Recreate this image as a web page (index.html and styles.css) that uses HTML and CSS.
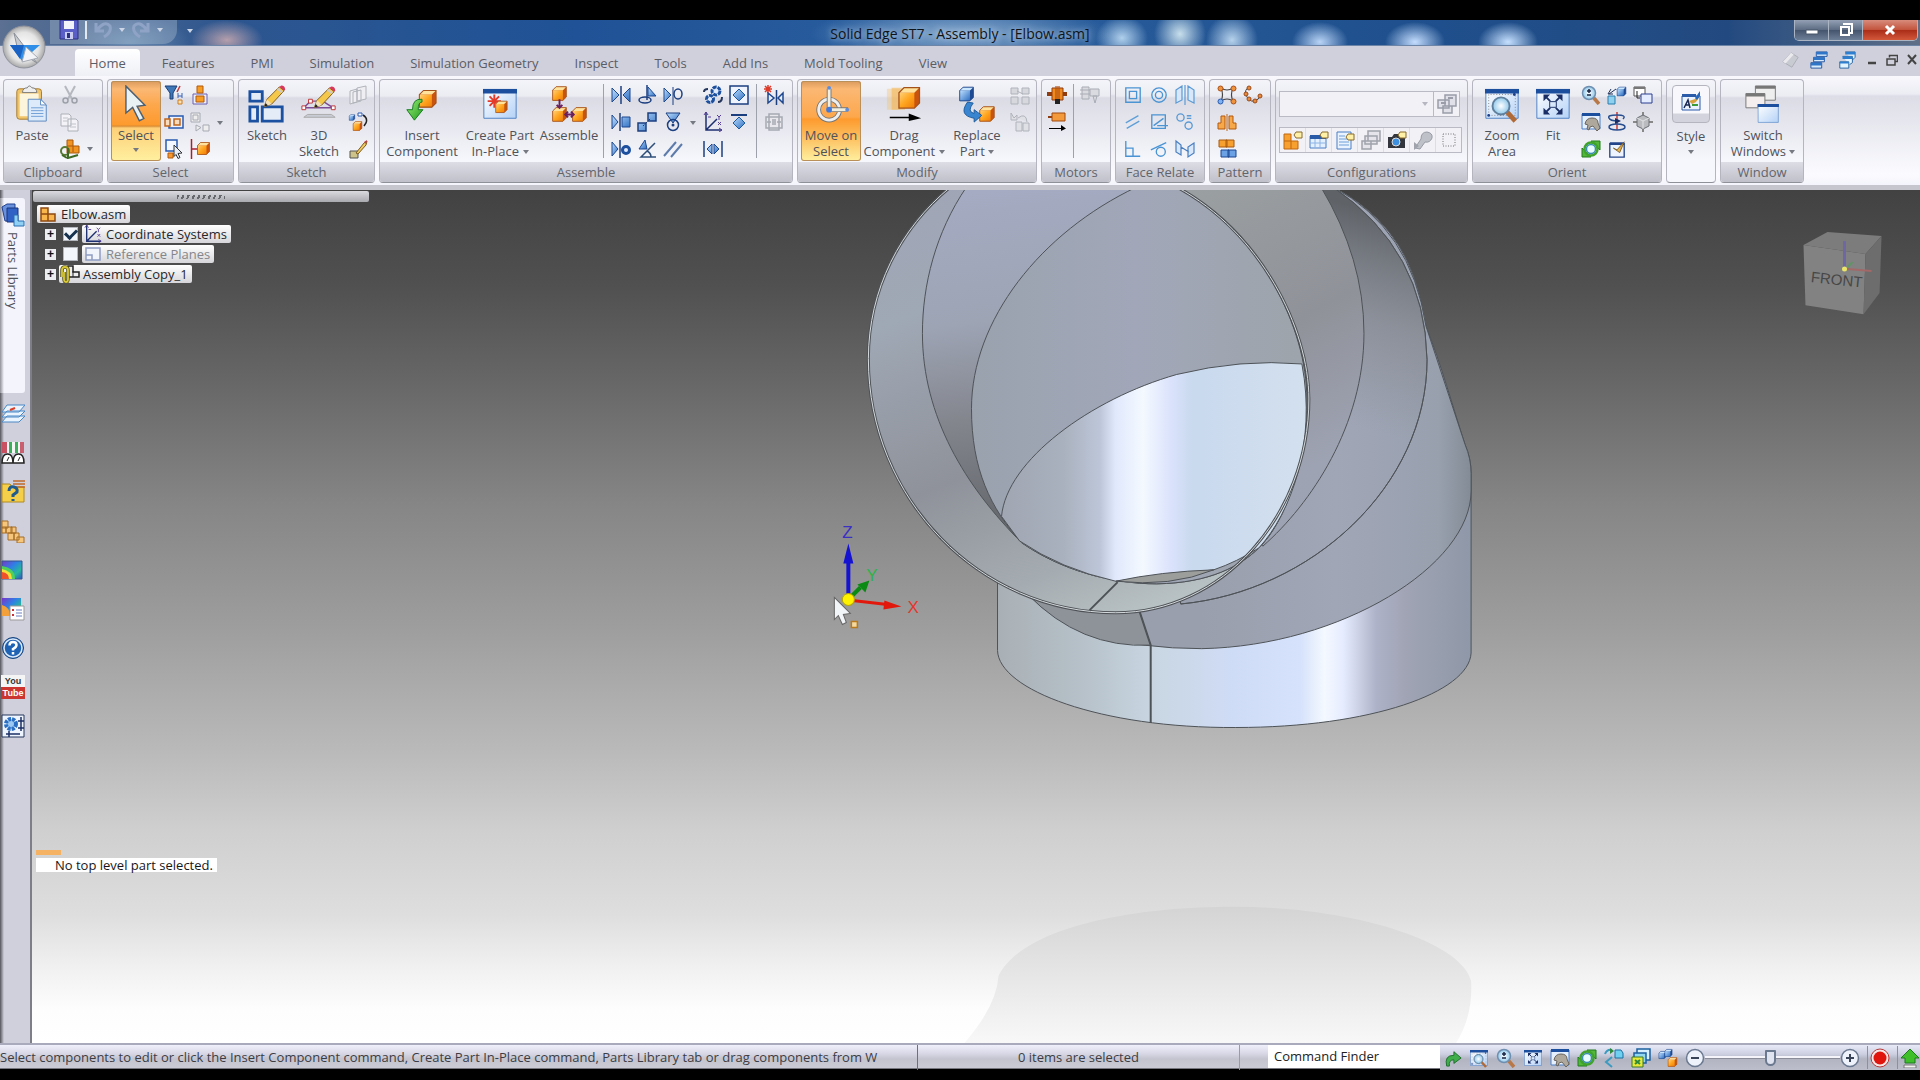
FILE: index.html
```html
<!DOCTYPE html>
<html lang="en">
<head>
<meta charset="utf-8">
<title>Solid Edge ST7 - Assembly - [Elbow.asm]</title>
<link rel="stylesheet" href="styles.css">
</head>
<body>
<svg class="sprite" width="0" height="0" aria-hidden="true">
  <defs>
    <linearGradient id="gOr" x1="0" y1="0" x2="1" y2="1"><stop offset="0" stop-color="#ffd27a"/><stop offset=".5" stop-color="#ffa51f"/><stop offset="1" stop-color="#ef7d08"/></linearGradient>
    <linearGradient id="gBl" x1="0" y1="0" x2="1" y2="1"><stop offset="0" stop-color="#bfe0ff"/><stop offset="1" stop-color="#2a6cc0"/></linearGradient>
    <linearGradient id="gWin" x1="0" y1="0" x2="1" y2="1"><stop offset="0" stop-color="#fff"/><stop offset="1" stop-color="#b4d2f7"/></linearGradient>
    <linearGradient id="gGr" x1="0" y1="0" x2="1" y2="1"><stop offset="0" stop-color="#9ff07a"/><stop offset="1" stop-color="#1f9a1c"/></linearGradient>
    <linearGradient id="gHot" x1="0" y1="0" x2="1" y2="1"><stop offset="0" stop-color="#7a35c8"/><stop offset=".4" stop-color="#2f7fe6"/><stop offset=".7" stop-color="#24b89a"/><stop offset="1" stop-color="#2f50c8"/></linearGradient>
    <radialGradient id="gLens"><stop offset="0" stop-color="#fff"/><stop offset="1" stop-color="#8fc8ea"/></radialGradient>
    <radialGradient id="gOrb"><stop offset="0" stop-color="#fff"/><stop offset=".7" stop-color="#e4e4e4"/><stop offset="1" stop-color="#a8a8a8"/></radialGradient>
  </defs>
  <symbol id="cubeO" viewBox="0 0 20 20"><path d="M2 6 6 2h12v12l-4 4H2z" fill="#c9540e"/><path d="M2 6h12v12H2z" fill="url(#gOr)"/><path d="M2 6 6 2h12l-4 4z" fill="#ffe29b"/><path d="M2 6 6 2h12v12l-4 4H2z" fill="none" stroke="#a4521a"/></symbol>
  <symbol id="cubeB" viewBox="0 0 20 20"><path d="M2 6 6 2h12v12l-4 4H2z" fill="#1d4a94"/><path d="M2 6h12v12H2z" fill="url(#gBl)"/><path d="M2 6 6 2h12l-4 4z" fill="#cbe6ff"/><path d="M2 6 6 2h12v12l-4 4H2z" fill="none" stroke="#1d458a"/></symbol>
  <symbol id="win" viewBox="0 0 36 32"><path d="M1 1h34v30H1z" fill="url(#gWin)" stroke="#4c7fc4"/><path d="M0 0h36v5H0z" fill="#1c4f9e"/></symbol>
  <symbol id="pencil" viewBox="0 0 24 24"><path d="m1 23 3-8L17 2l5 4L9 20z" fill="#f5c84c" stroke="#7c5a1c"/><path d="m1 23 3-8 5 5z" fill="#f3dfb8"/><path d="m1 23 1.500-4 2.500 2.500z" fill="#222"/><path d="m17 2 2-1.500q4 0 4 4L22 6z" fill="#d8385a"/><path d="m15 4 5 4" stroke="#ccc" stroke-width="2"/></symbol>

  <symbol id="paste" viewBox="0 0 36 40"><rect x="2" y="4" width="26" height="32" rx="3" fill="#f0c469" stroke="#a77a2c"/><path d="M8 8q0-5 5-5 2-4 5 0 5 0 5 5z" fill="#eee" stroke="#777"/><path d="M5 9h20v24H5z" fill="#fdf4dc"/><path d="M14 15h13l6 6v17H14z" fill="#dceafa" stroke="#5b87c0"/><path d="M27 15v6h6z" fill="#fff" stroke="#5b87c0"/><path d="M17 24h13M17 27h13M17 30h13M17 33h13" stroke="#6f9fd6"/></symbol>
  <symbol id="arrowCur" viewBox="0 0 24 34"><path d="m3 1 17 17-7 1 6 11-4 2-6-12-6 5z" fill="#e8f2f5" stroke="#4f6070" stroke-width="1.300"/></symbol>
  <symbol id="sketch" viewBox="0 0 40 40"><path d="M2 7h13v10H2zM2 23h8v15H2zM15 23h21v15H15z" fill="#e4ecf8" stroke="#1c50a0" stroke-width="3"/><use href="#pencil" x="16" y="0" width="24" height="24"/></symbol>
  <symbol id="sketch3" viewBox="0 0 40 40"><path d="M4 24h31L24 17H11z" fill="none" stroke="#7c4a96" stroke-width="1.500"/><path d="M2 22h4v4H2zM33 22h4v4h-4zM9 15h4v4H9z" fill="#fff" stroke="#c03030"/><path d="M8 31h25l4 3H4z" fill="#c9ccd4" stroke="#aaa"/><use href="#pencil" x="14" y="1" width="24" height="24"/></symbol>
  <symbol id="insert" viewBox="0 0 40 40"><use href="#cubeO" x="15" y="3" width="22" height="23"/><path d="M20 15Q10 14 10 26H4l8 11 9-11h-5q0-8 4-8z" fill="url(#gGr)" stroke="#137a1c"/></symbol>
  <symbol id="create" viewBox="0 0 40 40"><use href="#win" x="2" y="4" width="36" height="32"/><path d="M14 10v14M7 17h14M9 12l10 10M19 12 9 22" stroke="#e43a2a" stroke-width="2"/><use href="#cubeO" x="14" y="15" width="15" height="16"/></symbol>
  <symbol id="assemble" viewBox="0 0 40 40"><use href="#cubeO" x="1" y="0" width="18" height="18"/><use href="#cubeO" x="1" y="22" width="18" height="18"/><use href="#cubeO" x="22" y="22" width="18" height="18"/><path d="M10 15v9m-3-3 3 3 3-3M16 31h9m-6-3-3 3 3 3m3-6 3 3-3 3" stroke="#6a1f5e" stroke-width="2" fill="none"/></symbol>
  <symbol id="moveSel" viewBox="0 0 40 40"><circle cx="18" cy="26" r="11" fill="none" stroke="#777" stroke-width="5"/><circle cx="18" cy="26" r="11" fill="none" stroke="#eee" stroke-width="3"/><path d="M18 28V4M16 26h22" stroke="#777" stroke-width="5"/><path d="M18 28V4M16 26h22" stroke="#f2eedf" stroke-width="3"/><circle cx="18" cy="3" r="2" fill="#5a8ce0"/><circle cx="37" cy="26" r="2" fill="#5a8ce0"/><circle cx="18" cy="26" r="3" fill="#4178dc"/></symbol>
  <symbol id="drag" viewBox="0 0 40 40"><path d="M2 4h14v22H2z" fill="#f6c060" opacity=".35"/><path d="M7 3h14v23H7z" fill="#f6b040" opacity=".5"/><use href="#cubeO" x="12" y="0" width="27" height="27"/><path d="M5 33.500h20V30l13 5-13 3v-3H5z"/></symbol>
  <symbol id="replace" viewBox="0 0 40 40"><use href="#cubeB" x="0" y="0" width="18" height="19"/><use href="#cubeO" x="21" y="21" width="19" height="19"/><path d="M10 18Q0 32 17 35v4l8-7-8-6v4q-8-2-1-11z" fill="#3985cf" stroke="#1b5a9c"/></symbol>
  <symbol id="zoomArea" viewBox="0 0 40 40"><use href="#win" x="2" y="4" width="36" height="32"/><path d="M6 32V10h28v22z" fill="none" stroke="#888" stroke-dasharray="1 2"/><circle cx="6" cy="32" r="1.500" fill="#1c3f8a"/><circle cx="33" cy="10" r="1.500" fill="#1c3f8a"/><path d="m25 28 9 10" stroke="#b06a38" stroke-width="5"/><circle cx="19" cy="22" r="9" fill="url(#gLens)" stroke="#5f7f9c" stroke-width="2"/></symbol>
  <symbol id="fit" viewBox="0 0 40 40"><use href="#win" x="2" y="4" width="36" height="32"/><path d="M16.500 17.500h7v6h-7z" fill="none" stroke="#1b2f66"/><path d="m12 12 5 5m11-5-5 5M12 29l5-5m11 5-5-5" stroke="#1b2f66" stroke-width="2"/><path d="M10 10h7l-7 7zM30 10v7l-7-7zM10 31v-7l7 7zM30 31h-7l7-7z" fill="#1b2f66"/></symbol>
  <symbol id="switchW" viewBox="0 0 40 40"><path d="M12 1h21v15H12z" fill="#eee" stroke="#777"/><path d="M12 1h21v3H12z" fill="#777"/><path d="M2 9h20v15H2z" fill="#f5eeee" stroke="#777"/><path d="M2 9h20v3H2z" fill="#777"/><use href="#win" x="12" y="20" width="27" height="20"/></symbol>
  <symbol id="styleI" viewBox="0 0 20 20"><path d="M1 5h18v14H1z" fill="#eaf2ff" stroke="#2a5ba8"/><path d="M1 3h14v3H1z" fill="#2a5ba8"/><path d="m3 17 4-8 2 8M4 14h4" stroke="#1b2a55" stroke-width="1.500" fill="none"/><path d="m8 10 6-2 5-7v4l-4 6-4 2z" fill="#d8a13c"/><path d="m14 7 5-7v5l-3 4z" fill="#2366c0"/><path d="M11 14h6" stroke="#3a9a3a" stroke-width="2"/></symbol>

  <symbol id="cut" viewBox="0 0 20 20"><path d="m5 1 7 13M15 1 8 14" stroke="#b5b8bf" stroke-width="2"/><circle cx="5.500" cy="15.500" r="2.500" fill="none" stroke="#9da0a8" stroke-width="1.500"/><circle cx="14.500" cy="15.500" r="2.500" fill="none" stroke="#9da0a8" stroke-width="1.500"/></symbol>
  <symbol id="copy" viewBox="0 0 20 20"><path d="M1 2h8l2 2v10H1zM8 7h8l2 2v10H8z" fill="#f4f4f8" stroke="#adb0b8"/><path d="M3 6h5M3 9h5M10 12h6M10 15h6" stroke="#c0c2ca"/></symbol>
  <symbol id="pasteSp" viewBox="0 0 20 20"><path d="M7 1h6v6h6v7H7z" fill="#f29422" stroke="#a8590f"/><path d="M7 7h6v6" fill="none" stroke="#a8590f"/><circle cx="5" cy="12" r="4" fill="none" stroke="#5a7a34" stroke-width="2"/><path d="M8 9v10l10-3M2 16l5 3" stroke="#3f6a24" stroke-width="2" fill="none"/></symbol>
  <symbol id="filter" viewBox="0 0 20 20"><path d="M1 1h12L9 8v6H6V8z" fill="#3d77b8" stroke="#1d3f76"/><path d="m16 1-3 6" stroke="#c03b3b" stroke-width="1.500"/><path d="M14 8v5m4-5v5m-4-2h4" stroke="#3a62b8"/><path d="M14 15h4v4h-4z" fill="#fbe2b4" stroke="#d07d1c"/></symbol>
  <symbol id="boxAsm" viewBox="0 0 20 20"><path d="M3 9h14v10H3z" fill="#e9eefb" stroke="#6a5fb0"/><path d="M7 1h6v7H7zM6 11h8v6H6z" fill="#f79d24" stroke="#b3590c"/></symbol>
  <symbol id="fence" viewBox="0 0 20 20"><path d="M5 4h14v12H5z" fill="#eef3ff" stroke="#2a5bb0" stroke-width="1.500"/><path d="M1 7h5v7H1zM10 7h6v6h-6z" fill="#f7dcc0" stroke="#c06518" stroke-width="1.500"/></symbol>
  <symbol id="opt" viewBox="0 0 20 20"><path d="M1 1h9v9H1zM3 3h5v5H3zM13 13h6v6h-6zM6 13l5 2.500L6 19z" fill="#eee" stroke="#a6a9b2"/></symbol>
  <symbol id="selCur" viewBox="0 0 20 20"><path d="M2 1h11v11H2z" fill="#f3f7ff" stroke="#2a5bb0" stroke-width="1.500"/><path d="M4 14h5v5H4z" fill="#f49a30" stroke="#b3590c"/><path d="m10 6 8 8-4 .500 2 4-2 1-2-4-2 2z" fill="#e5eef8" stroke="#333"/></symbol>
  <symbol id="redCube" viewBox="0 0 20 20"><path d="M1.500 0v20M2 10h6" stroke="#a82030" stroke-width="1.500"/><use href="#cubeO" x="6" y="2" width="15" height="15"/></symbol>
  <symbol id="sheets" viewBox="0 0 20 20"><path d="M9 3l9-2v13l-9 2zM2 6l7-2v13l-7 2zM5 7l8-2v11l-8 2z" fill="#efeff3" stroke="#b0b3ba"/></symbol>
  <symbol id="cubeRot" viewBox="0 0 20 20"><use href="#cubeB" x="0" y="2" width="8" height="7"/><use href="#cubeO" x="4" y="8" width="11" height="12"/><path d="M10 1h4v3h-4z" fill="#fff" stroke="#2a5bb0"/><path d="M15 3q5 3 3 8l-2 3" fill="none" stroke="#222" stroke-width="1.500"/></symbol>
  <symbol id="brush" viewBox="0 0 20 20"><path d="M2 12h8v7H2z" fill="#ccc28a" stroke="#555"/><path d="m8 14 8-10 3-2-1 4-8 9z" fill="#f0c960" stroke="#7a5b20"/><path d="m16 3 3-2-1 4z" fill="#cf3a4c"/></symbol>

  <symbol id="mate" viewBox="0 0 20 20"><path d="M10 1v18" stroke="#1c3f80" stroke-width="1.500"/><path d="m1 3 7 7-7 7zM19 3v14l-7-7z" fill="url(#gBl)" stroke="#1c4790"/></symbol>
  <symbol id="axial" viewBox="0 0 20 20"><path d="M10 0v15" stroke="#1c3f80" stroke-width="1.500"/><path d="m11 2 8 9h-8z" fill="url(#gBl)" stroke="#1c4790"/><ellipse cx="8" cy="15" rx="6" ry="3" fill="none" stroke="#1c3f80" stroke-width="1.500"/></symbol>
  <symbol id="insertR" viewBox="0 0 20 20"><path d="m1 3 7 7-7 7z" fill="url(#gBl)" stroke="#1c4790"/><path d="M10 2v18" stroke="#1c3f80"/><ellipse cx="15" cy="9" rx="4" ry="5" fill="none" stroke="#1c3f80" stroke-width="1.500"/></symbol>
  <symbol id="align" viewBox="0 0 20 20"><path d="m1 3 6 7-6 7zM11 5h8v10h-8z" fill="url(#gBl)" stroke="#1c4790"/><path d="M9 1v18" stroke="#1c3f80" stroke-width="1.500"/></symbol>
  <symbol id="connect" viewBox="0 0 20 20"><path d="M1 11h8v8H1zM11 1h8v8h-8z" fill="url(#gBl)" stroke="#1c3f80" stroke-width="1.500"/><path d="m6 14 8-8" stroke="#1c3f80" stroke-dasharray="2"/></symbol>
  <symbol id="tangent" viewBox="0 0 20 20"><path d="M3 1h14l-7 10z" fill="url(#gBl)" stroke="#1c3f80"/><circle cx="10" cy="13" r="5.500" fill="none" stroke="#1c3f80" stroke-width="1.500"/><circle cx="10" cy="13" r="1.500" fill="#1c3f80"/></symbol>
  <symbol id="gearR" viewBox="0 0 20 20"><path d="m1 3 6 7-6 7z" fill="url(#gBl)" stroke="#1c4790"/><path d="M9 1v18" stroke="#1c3f80" stroke-width="1.500"/><circle cx="15" cy="11" r="3.500" fill="#dfeaff" stroke="#1c4f9e" stroke-width="3"/></symbol>
  <symbol id="angleR" viewBox="0 0 20 20"><path d="m8 1 2 9H2z" fill="url(#gBl)" stroke="#1c4790"/><path d="M18 4 4 18h15M10 12q4 2 4 6" fill="none" stroke="#30507c" stroke-width="1.500"/></symbol>
  <symbol id="parR" viewBox="0 0 20 20"><path d="M1 17 13 3M8 18 19 5" stroke="#5d7cab" stroke-width="2"/></symbol>
  <symbol id="gears" viewBox="0 0 20 20"><circle cx="13" cy="6" r="4" fill="#dfeaff" stroke="#1c4f9e" stroke-width="3" stroke-dasharray="4 1"/><circle cx="7" cy="14" r="3.500" fill="#dfeaff" stroke="#1c4f9e" stroke-width="3" stroke-dasharray="4 1"/><path d="M1 7q0-3 4-3M19 12q0 5-4 5" stroke="#24365c" stroke-width="2" fill="none"/></symbol>
  <symbol id="center" viewBox="0 0 20 20"><path d="M1 1h18v18H1z" fill="#eef3fd" stroke="#1c3f80" stroke-width="1.500"/><path d="m10 4 6 6-6 6-6-6z" fill="url(#gBl)" stroke="#1c5a9e"/></symbol>
  <symbol id="csys" viewBox="0 0 20 20"><path d="M3 0v18h16M3 18 14 7" stroke="#1c2f70" stroke-width="1.500" fill="none"/><path d="m1 3 2-3 2 3M16 16l3 2-3 2M5 5h3M14 3l2 2 2-2M16 5v3M15 10l3 3M18 10l-3 3" stroke="#5a3f9a" fill="none"/></symbol>
  <symbol id="path" viewBox="0 0 20 20"><path d="M2 3h16" stroke="#1c3f80" stroke-width="2"/><path d="m10 5 6 6-6 6-6-6z" fill="url(#gBl)" stroke="#1c5a9e"/></symbol>
  <symbol id="cam" viewBox="0 0 20 20"><path d="M1 2v16M19 2v16" stroke="#1c3f80" stroke-width="1.500"/><path d="m9 5v10l-5-5zM11 5v10l5-5z" fill="url(#gBl)" stroke="#1c4790"/></symbol>
  <symbol id="newRel" viewBox="0 0 20 20"><path d="M4 0v8M0 4h8M1 1l6 6M7 1 1 7" stroke="#dc3b2a" stroke-width="1.500"/><path d="M12.500 5v15" stroke="#1c3f80" stroke-width="1.500"/><path d="m4 8 6 5-6 5zM19 8v10l-5-5z" fill="#e6eefb" stroke="#1c4790" stroke-width="1.500"/></symbol>
  <symbol id="greyBox" viewBox="0 0 20 20"><path d="M2 5h16v11H2zM5 2h10v16H5z" fill="#e9e9ed" stroke="#a6a9b2" stroke-width="1.500"/><path d="M3 10h4M13 10h4M9 7v6M11 7v6" stroke="#a6a9b2" stroke-width="1.500"/></symbol>
  <symbol id="greyA" viewBox="0 0 20 20"><path d="M1 3h7v6H1zM12 3h7v6h-7zM1 12h7v7H1zM12 12h7v7h-7zM7 6l6 3" fill="#d6d8de" stroke="#b0b3ba"/></symbol>
  <symbol id="greyB" viewBox="0 0 20 20"><path d="M1 1v7h6V3l-3 3zM6 10h6v9H6zM13 11h6v8h-6zM8 6q8-6 9 4" fill="#dfe0e6" stroke="#b0b3ba"/></symbol>
  <symbol id="motor" viewBox="0 0 20 20"><path d="M0 9h20" stroke="#8f3d10" stroke-width="4"/><path d="M5 3h11v12H5z" fill="#f08a1c" stroke="#8f3d10"/><path d="M8 1h5v14H8z" fill="#b25212" opacity=".6"/><path d="M8 14h5v5H8z" fill="#222"/></symbol>
  <symbol id="motorL" viewBox="0 0 20 20"><path d="M1 5h5" stroke="#8f3d10" stroke-width="2"/><path d="M5 1h13v8H5z" fill="#f29a3c" stroke="#a0480f"/><path d="M2 16h12v-3l5 3.500-5 2.500v-2H2z"/></symbol>
  <symbol id="motorG" viewBox="0 0 20 20"><path d="M2 2h7v12H2zM0 5h10M0 9h10M10 4h9v7h-9zM13 11h4l-2 7z" fill="#dadbe1" stroke="#a9acb4"/></symbol>
  <symbol id="fr1" viewBox="0 0 20 20"><path d="M2 2h16v16H2zM6 6h8v8H6z" fill="none" stroke="#4a94d4" stroke-width="1.500"/></symbol>
  <symbol id="fr2" viewBox="0 0 20 20"><g fill="none" stroke="#4a94d4" stroke-width="1.500"><circle cx="10" cy="10" r="8"/><circle cx="10" cy="10" r="4"/></g></symbol>
  <symbol id="fr3" viewBox="0 0 20 20"><path d="m1 5 6-4v14l-6 3zM13 1l6 4v13l-6-3zM10 0v20" fill="#d8e8fa" stroke="#5b9ad4" stroke-width="1.200"/></symbol>
  <symbol id="fr4" viewBox="0 0 20 20"><path d="m2 11 14-8M3 17l14-8" stroke="#5f9fd8" stroke-width="1.500"/></symbol>
  <symbol id="fr5" viewBox="0 0 20 20"><path d="M2 2h15v15H2zM4 14l11-8M8 14h12" fill="none" stroke="#4a94d4" stroke-width="1.500"/></symbol>
  <symbol id="fr6" viewBox="0 0 20 20"><g fill="none" stroke="#5b9ad4" stroke-width="1.500"><circle cx="5" cy="5" r="4"/><circle cx="14" cy="14" r="4"/><path d="M12 3h5M12 6h5"/></g></symbol>
  <symbol id="fr7" viewBox="0 0 20 20"><path d="M2 1v17h16M2 9h8v9" fill="none" stroke="#4a94d4" stroke-width="1.500"/></symbol>
  <symbol id="fr8" viewBox="0 0 20 20"><circle cx="12" cy="13" r="5" fill="none" stroke="#4a94d4" stroke-width="1.500"/><path d="M1 11 18 3" stroke="#4a94d4" stroke-width="1.500"/></symbol>
  <symbol id="fr9" viewBox="0 0 20 20"><path d="m1 2 5 4v10l-5-3zM19 4l-6 4v10l6-4zM6 8l8 5" fill="#d8e8fa" stroke="#4a7fc0" stroke-width="1.200"/></symbol>
  <symbol id="pat1" viewBox="0 0 20 20"><path d="M4 3q6 4 12 0-3 7 0 13-6-4-12 0 3-6 0-13z" fill="none" stroke="#444" stroke-width="1.200"/><g fill="#f0923c" stroke="#a8511a"><circle cx="3.500" cy="3.500" r="2.500"/><circle cx="16.500" cy="3.500" r="2.500"/><circle cx="16.500" cy="16.500" r="2.500"/></g><circle cx="3.500" cy="16.500" r="2.500" fill="#7fb0f0" stroke="#2a5bb0"/></symbol>
  <symbol id="pat2" viewBox="0 0 20 20"><path d="M6 2Q1 5 3 10q3 7 8 6 5-1 7-6" fill="none" stroke="#444"/><g fill="#e8893a" stroke="#9a4a1a"><circle cx="6" cy="3" r="2"/><circle cx="3" cy="9" r="2"/><circle cx="6" cy="14" r="2"/><circle cx="12" cy="16" r="2"/><circle cx="17" cy="11" r="2"/></g></symbol>
  <symbol id="pat3" viewBox="0 0 20 20"><path d="M10 2v17" stroke="#c06518"/><path d="M8 4v13H1v-6h3V4zM12 4v13h7v-6h-3V4z" fill="#f7a848" stroke="#b3590c"/></symbol>
  <symbol id="pat4" viewBox="0 0 20 20"><path d="M2 1h8v7H2zM9 1h8v7H9z" fill="#f7a030" stroke="#a8590f"/><path d="M4 11h8v7H4zM11 11h8v7h-8z" fill="#6ba2e6" stroke="#1c4790"/></symbol>
  <symbol id="tag" viewBox="0 0 10 8"><path d="M3 1h6v6H3L1 4z" fill="#fff0a8" stroke="#8a6a2a"/></symbol>
  <symbol id="cf1" viewBox="0 0 20 20"><path d="M1 4h7v7h7v8H1zM1 11h7v8" fill="#f7a030" stroke="#c0660f"/><use href="#tag" x="10" y="1" width="10" height="8"/></symbol>
  <symbol id="cf2" viewBox="0 0 20 20"><path d="M1 6h16v12H1z" fill="#e4efff" stroke="#4a7fc4"/><path d="M1 5h16v4H1z" fill="#2a5ba8"/><path d="M6 9v9M11 9v9M1 13h16" stroke="#8db4e4"/><use href="#tag" x="10" y="1" width="10" height="8"/></symbol>
  <symbol id="cf3" viewBox="0 0 20 20"><path d="M2 2h14v17H2z" fill="#e9f2ff" stroke="#4a7fc4"/><path d="M4 6h6M4 9h8M4 12h10M4 15h10" stroke="#6f9fd6"/><use href="#tag" x="10" y="3" width="10" height="8"/></symbol>
  <symbol id="cf4" viewBox="0 0 20 20"><path d="M7 1h12v10H7zM4 6h12v8H4zM1 11h9v8H1z" fill="#e4e4ea" stroke="#a0a3ac" stroke-width="1.500"/></symbol>
  <symbol id="cf5" viewBox="0 0 20 20"><path d="M1 7h4l2-3h5l2 3h4v11H1z" fill="#33363c"/><circle cx="9" cy="12" r="4" fill="#3d8fe0" stroke="#ddd"/><use href="#tag" x="10" y="1" width="10" height="8"/></symbol>
  <symbol id="cf6" viewBox="0 0 20 20"><path d="m2 18 6-9q0-7 6-7 6 1 5 6-2 5-7 4l-5 7z" fill="#bfc1c8" stroke="#989ba4"/><path d="m1 12 5 4-5 4z" fill="#a0a3ac"/></symbol>
  <symbol id="cf7" viewBox="0 0 20 20"><path d="M4 4h12v12H4z" fill="none" stroke="#777" stroke-dasharray="1 1.500"/></symbol>
  <symbol id="cf8" viewBox="0 0 20 20"><path d="M8 1h11v11H8zM1 6h11v8H1zM6 12h9v7H6z" fill="#dfe0e8" stroke="#9a9da8" stroke-width="1.500"/><path d="M11 4h5M4 9h5" stroke="#9a9da8" stroke-width="2"/></symbol>
  <symbol id="zoomI" viewBox="0 0 20 20"><path d="m12 12 6 7" stroke="#b87848" stroke-width="3.500"/><circle cx="8" cy="8" r="6.500" fill="url(#gLens)" stroke="#6f8fb0" stroke-width="1.500"/><path d="M8 4v4M6 6h4M6 10h4" stroke="#1a2440" stroke-width="1.500"/></symbol>
  <symbol id="orient" viewBox="0 0 20 20"><use href="#cubeB" x="9" y="0" width="11" height="13"/><path d="M1 11h7v8H1z" fill="#8fd0ee" stroke="#2a7fb0"/><path d="m2 9 7-5M4 4l-3 5h5" stroke="#24365c" fill="none"/></symbol>
  <symbol id="winsI" viewBox="0 0 20 20"><path d="M1 2h11v9H1z" fill="#fff" stroke="#555"/><path d="M1 2h11v2H1z" fill="#777"/><path d="M8 9h11v9H8z" fill="#e4ecff" stroke="#2a3f90"/><path d="M4 6v7h3" stroke="#222" fill="none"/></symbol>
  <symbol id="pan" viewBox="0 0 20 20"><path d="M1 2h18v15H1z" fill="#e4efff" stroke="#4a7fc4"/><path d="M1 1h18v3H1z" fill="#1c4f9e"/><path d="M4 12q1-6 7-6 6 0 6 5l2 5-3 3-4-5-3 1-1 3-2-1 1-4z" fill="#ada79c" stroke="#6a655c"/></symbol>
  <symbol id="spin" viewBox="0 0 20 20"><path d="M10 0v18" stroke="#c83a3a" stroke-width="1.500"/><g fill="none" stroke="#2a4f90" stroke-width="1.500"><path d="M16 7q4-4-6-4T2 6q1 3 9 3"/><ellipse cx="10" cy="15" rx="8" ry="3"/></g><path d="m8 6 6 3-6 3z" fill="#1b2f66"/></symbol>
  <symbol id="shade" viewBox="0 0 20 20"><path d="M10 0v20M0 10h20" stroke="#888" stroke-width="2"/><path d="m10 3 6 3v8l-6 3-6-3V6z" fill="#b9bbbf" stroke="#6c6f75"/><path d="m4 6 6 3 6-3M10 9v8" stroke="#e2e2e5" fill="none"/></symbol>
  <symbol id="rotate" viewBox="0 0 20 20"><path d="M10 2h9v9zM10 18H1V9z" fill="#53b83a" stroke="#237a1c"/><circle cx="10" cy="10" r="6.500" fill="none" stroke="#3fa32c" stroke-width="2.500"/><circle cx="10" cy="10" r="4.500" fill="#e9fbff" stroke="#3a8fb0" stroke-width="1.500"/></symbol>
  <symbol id="sketchV" viewBox="0 0 20 20"><path d="M2 4h16v15H2z" fill="#eef4ff" stroke="#24458a" stroke-width="1.500"/><path d="M2 4h16" stroke="#24458a" stroke-width="3"/><path d="m6 9 4 2 8-9-5 12z" fill="#e6b04a" stroke="#7a5b20"/></symbol>

  <symbol id="layers" viewBox="0 0 24 24"><path d="m1 20 5-6h18l-6 6zM1 15l5-6h18l-6 6zM1 10l5-7h18l-6 7z" fill="#e9f4ff" stroke="#4a88c4"/><path d="m9 8 5-2" stroke="#d8402a" stroke-width="2"/></symbol>
  <symbol id="gauge" viewBox="0 0 24 24"><path d="M1 1h22v11H1z" fill="#f6f6f6"/><path d="M1 1h5v11H1z" fill="#c85060"/><path d="M8 1h3v11H8zM14 1h3v11h-3z" fill="#3aae5c"/><path d="M19 1h4v11h-4z" fill="#c86070"/><path d="M1 22q0-9 5.500-9t5.500 9q0-9 5.500-9t5.500 9z" fill="#fff" stroke="#222" stroke-width="1.500"/><path d="m6 20 2-4M17 20l2-4" stroke="#222"/></symbol>
  <symbol id="helpF" viewBox="0 0 24 24"><path d="M1 4h8l2 3h12v15H1z" fill="#f5cf4a" stroke="#b08a20"/><path d="M12 1h12M12 4h12M14 7h10" stroke="#c06a2a" stroke-width="1.500"/><path d="M8 11q0-5 5-4 4 1 3 5l-4 3v2M12 19v2" stroke="#1f5b90" stroke-width="3" fill="none"/></symbol>
  <symbol id="bricks" viewBox="0 0 24 24"><g fill="#f5c67c" stroke="#a56c26"><path d="M1 2h6v7H1zM5 8h6v6H5zM10 8h5v6h-5zM7 14h6v7H7zM13 14h5v7h-5zM16 18h7v6h-7zM1 8h4v6H1z"/></g></symbol>
  <symbol id="heat" viewBox="0 0 24 24"><path d="M1 3h20v18H1z" fill="url(#gHot)" stroke="#34568c"/><path d="M1 8q13 2 13 13H1z" fill="#4fd05a"/><path d="M1 11q10 2 10 10H1z" fill="#f4e03a"/><path d="M1 14q7 1 7 7H1z" fill="#f0502a"/></symbol>
  <symbol id="heatDoc" viewBox="0 0 24 24"><path d="M1 1h19v18H1z" fill="url(#gHot)"/><path d="M1 8q8 2 8 11H1z" fill="#f4a03a"/><path d="M9 9h14v14H9z" fill="#fff" stroke="#999"/><path d="M15 13h6M15 16h6M15 19h6" stroke="#6a7fc0"/><path d="M11 12h2v2h-2zM11 17h2v2h-2z" fill="#c8303a"/></symbol>
  <symbol id="help" viewBox="0 0 24 24"><circle cx="12" cy="12" r="10.500" fill="#1f62b4" stroke="#18467e"/><circle cx="12" cy="12" r="9" fill="none" stroke="#dbe8f8" stroke-width="1.500"/><path d="M8.500 9.500q0-3.500 3.500-3.500t3.500 3q0 2-3.500 4v1.500M12 16v2.500" fill="none" stroke="#fff" stroke-width="2.500"/></symbol>
  <symbol id="gearDoc" viewBox="0 0 24 24"><path d="M1 1h22v22H1z" fill="#eef5ff" stroke="#24365c"/><circle cx="10" cy="10" r="5" fill="#9cc8f4" stroke="#2a6fc4" stroke-width="4" stroke-dasharray="3 1"/><path d="M20 3v14M17 7h6M17 14h6M5 20h14M8 17v6" stroke="#1b2f66" stroke-width="1.500"/></symbol>
  <symbol id="partsLib" viewBox="0 0 24 24"><path d="M1 4 6 1h8v14l-4 3H4z" fill="#6a92dc" stroke="#1f3f90"/><path d="M6 5h11v14H6z" fill="#2f62c4" stroke="#1b3580"/><path d="M13 12h4v6h6v5H13z" fill="#8fd0f4" stroke="#2a6fb0"/></symbol>
  <symbol id="asm" viewBox="0 0 16 16"><path d="M1 2h7v6h7v7H1zM1 8h7v7" fill="#f9b64c" stroke="#8f4a10" stroke-width="1.500"/></symbol>
  <symbol id="planes" viewBox="0 0 16 14"><path d="M1 1h14v12H1zM1 8h6v5" fill="#f2f4fb" stroke="#8f9cc4" stroke-width="1.500"/></symbol>
  <symbol id="asmCopy" viewBox="0 0 20 18"><path d="M8 1h5v6h6v5H8z" fill="#eee" stroke="#222" stroke-width="1.500"/><path d="M13 6v6" stroke="#222"/><path d="M2 12V5q0-3 3-3t3 3v9q0 3-2 3t-2-3V7" fill="none" stroke="#55501a" stroke-width="3.500"/><path d="M2 12V5q0-3 3-3t3 3v9q0 3-2 3t-2-3V7" fill="none" stroke="#d8c83a" stroke-width="1.800"/></symbol>
  <symbol id="redo" viewBox="0 0 20 20"><path d="M3 19Q0 7 11 7V3l8 7-8 6v-4q-6 0-5 7z" fill="#3fae4a" stroke="#1c6a2a"/></symbol>
  <symbol id="prev" viewBox="0 0 20 20"><path d="M11 2h6l2 3v5h-8z" fill="#6fd0f0" stroke="#1c6fa0"/><path d="M1 6q2-5 7-4M8 9l-6 5 6 5" fill="none" stroke="#3a9ac0" stroke-width="2"/><path d="m6 0 4 3-4 3z" fill="#2c8a3a"/></symbol>
  <symbol id="stack" viewBox="0 0 20 20"><path d="M6 1h13v11H6z" fill="#d6f0ff" stroke="#1c5f9e" stroke-width="1.500"/><path d="M3 5h12v10H3z" fill="#8fd8f0" stroke="#1c5f9e" stroke-width="1.500"/><path d="M1 9h11v10H1z" fill="#e6e83a" stroke="#3a7a2a"/><path d="m4 12 5 4M9 12l-5 4" stroke="#2c8a3a" stroke-width="2"/></symbol>
  <symbol id="cubes" viewBox="0 0 20 20"><use href="#cubeB" x="0" y="2" width="9" height="10"/><use href="#cubeB" x="6" y="0" width="9" height="10"/><use href="#cubeO" x="9" y="8" width="11" height="12"/></symbol>
  <symbol id="rec" viewBox="0 0 20 20"><circle cx="10" cy="10" r="9" fill="#f4e6e6" stroke="#b83a3a"/><circle cx="10" cy="10" r="6.500" fill="#e0140c"/></symbol>
  <symbol id="up" viewBox="0 0 20 20"><path d="m10 1 9 9h-4v5H5v-5H1z" fill="#3fbf2a" stroke="#1c7a1c"/><path d="M4 17h12v3H4z" fill="#f2f2f2" stroke="#777"/></symbol>
  <symbol id="casc" viewBox="0 0 20 20"><path d="M7 1h12v5H7zM4 7h12v5H4zM1 13h12v6H1z" fill="#d9ebfb" stroke="#1c4f9e"/><path d="M7 1h12v3H7zM4 7h12v3H4zM1 13h12v3H1z" fill="#2f75c8"/></symbol>
  <symbol id="casc2" viewBox="0 0 20 20"><path d="M8 1h11v6l-3 3M5 6h11v7l-3 2M2 12h10v7H2z" fill="#e4f4ff" stroke="#1c5f9e"/><path d="M8 1h11v3H8zM5 6h11v3H5zM2 12h10v2H2z" fill="#2f7fd0"/></symbol>
</svg>

<div class="app">
  <header class="titlebar">
    <div class="left">
      <div class="quick">
        <button aria-label="Save"><svg class="i20" viewBox="0 0 20 20"><path d="M1 0h18v19H1z" fill="#5a5fc8" stroke="#2c2f80"/><path d="M5 1h10v8H5z" fill="#f2f2fa"/><path d="M6 12h8v7H6z" fill="#c8ccf0"/><path d="M8 13h3v5H8z" fill="#2c2f80"/></svg></button>
        <span class="qsep"></span>
        <button aria-label="Undo"><svg class="i20" viewBox="0 0 20 20"><path d="M3 3v8h8M4 10Q12 0 17 6q2 6-6 11" fill="none" stroke="#8fa3c6" stroke-width="3"/></svg></button>
        <i class="caret light"></i>
        <button aria-label="Redo"><svg class="i20" viewBox="0 0 20 20"><path d="M17 3v8H9M16 10Q8 0 3 6q-2 6 6 11" fill="none" stroke="#8fa3c6" stroke-width="3"/></svg></button>
        <i class="caret light"></i>
      </div>
      <i class="caret light custom"></i>
    </div>
    <h1>Solid Edge ST7 - Assembly - [Elbow.asm]</h1>
    <div class="right">
      <div class="winbtns">
        <button aria-label="Minimize"><svg viewBox="0 0 16 14"><path d="M2 7h12v4H2z" fill="#fff" stroke="#4a5668"/></svg></button>
        <button aria-label="Restore"><svg viewBox="0 0 16 14"><path d="M5 1h9v9h-2M3 4h8v8H3z" fill="none" stroke="#fff" stroke-width="2"/></svg></button>
        <button class="close" aria-label="Close"><svg viewBox="0 0 16 14"><path d="m4 3 8 8M12 3l-8 8" stroke="#fff" stroke-width="3"/></svg></button>
      </div>
    </div>
  </header>
  <button class="orb" aria-label="Application menu"><svg viewBox="0 0 44 44"><circle cx="22" cy="22" r="21" fill="url(#gOrb)" stroke="#8f939c"/><path d="M12 8 35 38 16 26z" fill="#c9cdd2" stroke="#8b9098"/><path d="M8 20h30L20 36z" fill="#2f8fe8"/><path d="M8 20h14l-4 14z" fill="#1a62c4"/><path d="m24 22 12 11-16 4z" fill="#f2f4f8" stroke="#a5a9b2"/></svg></button>

  <nav class="tabs">
    <button class="active">Home</button><button>Features</button><button>PMI</button><button>Simulation</button><button>Simulation Geometry</button><button>Inspect</button><button>Tools</button><button>Add Ins</button><button>Mold Tooling</button><button>View</button>
    <div class="doc">
      <button aria-label="Help"><svg class="i18" viewBox="0 0 20 20"><path d="m1 12 9-10 8 5-7 11z" fill="#c9cbd2" stroke="#a9acb4"/><path d="m1 12 9-10 3 2-9 10z" fill="#e9e9ee"/></svg></button>
      <button aria-label="Arrange"><svg class="i18"><use href="#casc"/></svg></button>
      <button aria-label="Cascade"><svg class="i18"><use href="#casc2"/></svg></button>
      <button aria-label="Minimize document"><svg class="i12" viewBox="0 0 12 12"><path d="M2 9h8" stroke="#444" stroke-width="2.500"/></svg></button>
      <button aria-label="Restore document"><svg class="i12" viewBox="0 0 12 12"><path d="M3.500 3.500v-2h8v6h-2M1 5h8v6H1z" fill="none" stroke="#444" stroke-width="1.500"/></svg></button>
      <button aria-label="Close document"><svg class="i12" viewBox="0 0 12 12"><path d="m2 1 8 9M10 1l-8 9" stroke="#444" stroke-width="2"/></svg></button>
    </div>
  </nav>

  <div class="ribbon">
    <section class="group g-clip">
      <div class="body">
        <button class="big w50"><svg class="ic"><use href="#paste"/></svg><span>Paste</span></button>
        <div class="small"><button aria-label="Cut"><svg class="i20"><use href="#cut"/></svg></button><button aria-label="Copy"><svg class="i20"><use href="#copy"/></svg></button><button aria-label="Paste special"><svg class="i20"><use href="#pasteSp"/></svg></button></div>
        <i class="caret low"></i>
      </div>
      <h2>Clipboard</h2>
    </section>
    <section class="group g-select">
      <div class="body">
        <button class="big w50 hot split"><svg class="ic"><use href="#arrowCur"/></svg><span>Select</span><i class="caret"></i></button>
        <div class="small"><button aria-label="Filter"><svg class="i20"><use href="#filter"/></svg></button><button aria-label="Fence"><svg class="i20"><use href="#fence"/></svg></button><button aria-label="Selection tool"><svg class="i20"><use href="#selCur"/></svg></button><button aria-label="Top level"><svg class="i20"><use href="#boxAsm"/></svg></button><button aria-label="Options"><svg class="i20"><use href="#opt"/></svg></button><button aria-label="Distance"><svg class="i20"><use href="#redCube"/></svg></button></div>
        <i class="caret mid"></i>
      </div>
      <h2>Select</h2>
    </section>
    <section class="group g-sketch">
      <div class="body">
        <button class="big w52"><svg class="ic"><use href="#sketch"/></svg><span>Sketch</span></button>
        <button class="big w52"><svg class="ic"><use href="#sketch3"/></svg><span>3D<br>Sketch</span></button>
        <div class="small"><button aria-label="Sheets"><svg class="i20"><use href="#sheets"/></svg></button><button aria-label="Transfer"><svg class="i20"><use href="#cubeRot"/></svg></button><button aria-label="Paint"><svg class="i20"><use href="#brush"/></svg></button></div>
      </div>
      <h2>Sketch</h2>
    </section>
    <section class="group g-asm">
      <div class="body">
        <button class="big w78"><svg class="ic"><use href="#insert"/></svg><span>Insert<br>Component</span></button>
        <button class="big w78"><svg class="ic"><use href="#create"/></svg><span>Create Part<br>In-Place <i class="caret"></i></span></button>
        <button class="big w60"><svg class="ic"><use href="#assemble"/></svg><span>Assemble</span></button>
        <span class="sep"></span>
        <div class="small"><button aria-label="Mate"><svg class="i20"><use href="#mate"/></svg></button><button aria-label="Planar align"><svg class="i20"><use href="#align"/></svg></button><button aria-label="Gear"><svg class="i20"><use href="#gearR"/></svg></button><button aria-label="Axial align"><svg class="i20"><use href="#axial"/></svg></button><button aria-label="Connect"><svg class="i20"><use href="#connect"/></svg></button><button aria-label="Angle"><svg class="i20"><use href="#angleR"/></svg></button><button aria-label="Insert relation"><svg class="i20"><use href="#insertR"/></svg></button><button aria-label="Tangent"><svg class="i20"><use href="#tangent"/></svg></button><button aria-label="Parallel"><svg class="i20"><use href="#parR"/></svg></button></div>
        <i class="caret mid"></i>
        <div class="small"><button aria-label="Gears"><svg class="i20"><use href="#gears"/></svg></button><button aria-label="Coordinate match"><svg class="i20"><use href="#csys"/></svg></button><button aria-label="Cam"><svg class="i20"><use href="#cam"/></svg></button><button aria-label="Center plane"><svg class="i20"><use href="#center"/></svg></button><button aria-label="Path"><svg class="i20"><use href="#path"/></svg></button></div>
        <span class="sep"></span>
        <div class="small"><button aria-label="New relation"><svg class="i20"><use href="#newRel"/></svg></button><button aria-label="Relation group"><svg class="i20"><use href="#greyBox"/></svg></button></div>
      </div>
      <h2>Assemble</h2>
    </section>
    <section class="group g-mod">
      <div class="body">
        <button class="big w60 hot"><svg class="ic"><use href="#moveSel"/></svg><span>Move on<br>Select</span></button>
        <button class="big w86"><svg class="ic"><use href="#drag"/></svg><span>Drag<br>Component <i class="caret"></i></span></button>
        <button class="big w60"><svg class="ic"><use href="#replace"/></svg><span>Replace<br>Part <i class="caret"></i></span></button>
        <div class="small"><button aria-label="Transfer part"><svg class="i20"><use href="#greyA"/></svg></button><button aria-label="Disperse"><svg class="i20"><use href="#greyB"/></svg></button></div>
      </div>
      <h2>Modify</h2>
    </section>
    <section class="group g-mot">
      <div class="body">
        <div class="small"><button aria-label="Rotational motor"><svg class="i20"><use href="#motor"/></svg></button><button aria-label="Linear motor"><svg class="i20"><use href="#motorL"/></svg></button></div>
        <span class="sep"></span>
        <div class="small"><button aria-label="Simulate motor"><svg class="i20"><use href="#motorG"/></svg></button></div>
      </div>
      <h2>Motors</h2>
    </section>
    <section class="group g-face">
      <div class="body">
        <div class="small"><button aria-label="Coplanar"><svg class="i18"><use href="#fr1"/></svg></button><button aria-label="Parallel faces"><svg class="i18"><use href="#fr4"/></svg></button><button aria-label="Perpendicular"><svg class="i18"><use href="#fr7"/></svg></button><button aria-label="Concentric"><svg class="i18"><use href="#fr2"/></svg></button><button aria-label="Offset"><svg class="i18"><use href="#fr5"/></svg></button><button aria-label="Tangent faces"><svg class="i18"><use href="#fr8"/></svg></button><button aria-label="Symmetric"><svg class="i20"><use href="#fr3"/></svg></button><button aria-label="Equal radius"><svg class="i18"><use href="#fr6"/></svg></button><button aria-label="Ground"><svg class="i20"><use href="#fr9"/></svg></button></div>
      </div>
      <h2>Face Relate</h2>
    </section>
    <section class="group g-pat">
      <div class="body">
        <div class="small"><button aria-label="Pattern"><svg class="i20"><use href="#pat1"/></svg></button><button aria-label="Mirror"><svg class="i20"><use href="#pat3"/></svg></button><button aria-label="Duplicate"><svg class="i20"><use href="#pat4"/></svg></button><button aria-label="Along curve"><svg class="i20"><use href="#pat2"/></svg></button></div>
      </div>
      <h2>Pattern</h2>
    </section>
    <section class="group g-conf">
      <div class="body col">
        <div class="combo"><select aria-label="Display configuration" disabled><option></option></select><i class="caret"></i><button aria-label="Save configuration"><svg class="i20"><use href="#cf8"/></svg></button></div>
        <div class="strip"><button aria-label="Configurations"><svg class="i20"><use href="#cf1"/></svg></button><button aria-label="Table"><svg class="i20"><use href="#cf2"/></svg></button><button aria-label="List"><svg class="i20"><use href="#cf3"/></svg></button><button aria-label="Zones"><svg class="i20"><use href="#cf4"/></svg></button><button aria-label="Camera"><svg class="i20"><use href="#cf5"/></svg></button><button aria-label="Tools"><svg class="i20"><use href="#cf6"/></svg></button><button aria-label="Area"><svg class="i20"><use href="#cf7"/></svg></button></div>
      </div>
      <h2>Configurations</h2>
    </section>
    <section class="group g-ori">
      <div class="body">
        <button class="big w52"><svg class="ic"><use href="#zoomArea"/></svg><span>Zoom<br>Area</span></button>
        <button class="big w50"><svg class="ic"><use href="#fit"/></svg><span>Fit</span></button>
        <div class="small"><button aria-label="Zoom"><svg class="i20"><use href="#zoomI"/></svg></button><button aria-label="Pan"><svg class="i20"><use href="#pan"/></svg></button><button aria-label="Rotate"><svg class="i20"><use href="#rotate"/></svg></button><button aria-label="View orientation"><svg class="i20"><use href="#orient"/></svg></button><button aria-label="Spin about"><svg class="i20"><use href="#spin"/></svg></button><button aria-label="Sketch view"><svg class="i18"><use href="#sketchV"/></svg></button><button aria-label="Previous view"><svg class="i20"><use href="#winsI"/></svg></button><button aria-label="Common views"><svg class="i20"><use href="#shade"/></svg></button></div>
      </div>
      <h2>Orient</h2>
    </section>
    <section class="group g-style">
      <button class="stylebtn"><span class="frame"><svg class="i20"><use href="#styleI"/></svg></span>Style<i class="caret"></i></button>
    </section>
    <section class="group g-win">
      <div class="body">
        <button class="big w78"><svg class="ic"><use href="#switchW"/></svg><span>Switch<br>Windows <i class="caret"></i></span></button>
      </div>
      <h2>Window</h2>
    </section>
  </div>

  <div class="work">
    <aside class="side">
      <button class="lib"><svg class="i24"><use href="#partsLib"/></svg><span>Parts Library</span></button>
      <button aria-label="Layers"><svg class="i24"><use href="#layers"/></svg></button>
      <button aria-label="Sensors"><svg class="i24"><use href="#gauge"/></svg></button>
      <button aria-label="Select tools"><svg class="i24"><use href="#helpF"/></svg></button>
      <button aria-label="Alternate assemblies"><svg class="i24"><use href="#bricks"/></svg></button>
      <button aria-label="Simulation"><svg class="i24"><use href="#heat"/></svg></button>
      <button aria-label="Simulation results"><svg class="i24"><use href="#heatDoc"/></svg></button>
      <button aria-label="Help"><svg class="i24"><use href="#help"/></svg></button>
      <button class="yt"><span>You</span><b>Tube</b></button>
      <button aria-label="Engineering reference"><svg class="i24"><use href="#gearDoc"/></svg></button>
    </aside>
    <main class="view">
      <svg class="scene" viewBox="31 190 1889 852" preserveAspectRatio="xMidYMin slice" aria-label="Elbow model">
        <defs>
          <linearGradient id="base" gradientUnits="userSpaceOnUse" x1="997" y1="0" x2="1470" y2="0"><stop offset="0" stop-color="#a9b0b5"/><stop offset=".18" stop-color="#b6c1c9"/><stop offset=".33" stop-color="#c9d6e2"/><stop offset=".5" stop-color="#cfdcf6"/><stop offset=".64" stop-color="#d6e2fb"/><stop offset=".69" stop-color="#f4f9ff"/><stop offset=".73" stop-color="#e6ecff"/><stop offset=".8" stop-color="#aeb2c8"/><stop offset=".86" stop-color="#a0a4b4"/><stop offset="1" stop-color="#8f98a8"/></linearGradient>
          <linearGradient id="inner" gradientUnits="userSpaceOnUse" x1="1001" y1="0" x2="1308" y2="0"><stop offset="0" stop-color="#a0a6b2"/><stop offset=".2" stop-color="#a9b1be"/><stop offset=".32" stop-color="#bdc6d8"/><stop offset=".37" stop-color="#e0e8fc"/><stop offset=".46" stop-color="#f4f9ff"/><stop offset=".55" stop-color="#dbe3fc"/><stop offset=".62" stop-color="#c9d9ee"/><stop offset="1" stop-color="#d3e0ee"/></linearGradient>
          <linearGradient id="outer" gradientUnits="userSpaceOnUse" x1="1180" y1="200" x2="1440" y2="640"><stop offset="0" stop-color="#9a9fa1"/><stop offset=".35" stop-color="#909299"/><stop offset=".65" stop-color="#9ea3b3"/><stop offset="1" stop-color="#9aa1b0"/></linearGradient>
          <linearGradient id="mid" gradientUnits="userSpaceOnUse" x1="1200" y1="0" x2="1470" y2="0"><stop offset="0" stop-color="#999fac"/><stop offset=".5" stop-color="#a1a6b7"/><stop offset=".88" stop-color="#98a0ae"/><stop offset="1" stop-color="#838c96"/></linearGradient>
          <linearGradient id="topr" gradientUnits="userSpaceOnUse" x1="1350" y1="460" x2="1420" y2="230"><stop offset="0" stop-color="#8b8e96" stop-opacity="0"/><stop offset=".5" stop-color="#85888f" stop-opacity=".7"/><stop offset="1" stop-color="#5f6368"/></linearGradient>
          <linearGradient id="ring" gradientUnits="userSpaceOnUse" x1="900" y1="190" x2="1130" y2="680"><stop offset="0" stop-color="#a0a5b6"/><stop offset=".25" stop-color="#9fa8b5"/><stop offset=".6" stop-color="#8f929a"/><stop offset=".85" stop-color="#a5acb1"/><stop offset="1" stop-color="#b8c1c4"/></linearGradient>
          <linearGradient id="band" gradientUnits="userSpaceOnUse" x1="940" y1="200" x2="990" y2="560"><stop offset="0" stop-color="#a4abc2"/><stop offset=".4" stop-color="#9da4b4"/><stop offset=".7" stop-color="#84868e"/><stop offset="1" stop-color="#686b70"/></linearGradient>
          <linearGradient id="deep" gradientUnits="userSpaceOnUse" x1="970" y1="0" x2="1300" y2="0"><stop offset="0" stop-color="#9aa2ae"/><stop offset=".5" stop-color="#a1a7b8"/><stop offset="1" stop-color="#9da4ab"/></linearGradient>
          <linearGradient id="refl" x1="0" y1="0" x2="0" y2="1"><stop offset="0" stop-color="#d4d4d5"/><stop offset=".5" stop-color="#e6e6e7"/><stop offset="1" stop-color="#f8f8f8"/></linearGradient>
        </defs>
        <path d="M964 1042Q996 1005 998 975C1020 930 1120 906 1234 906C1350 906 1460 940 1470 980Q1472 1015 1455 1042z" fill="url(#refl)"/>
        <g class="edge" transform="matrix(1 0 0 .875 0 22.500)">
          <path d="M1030 188h302Q1400 228 1418 310Q1422 330 1425 347C1440 390 1452 440 1464 482Q1470 498 1470 515V720C1468 765 1370 805 1235 805C1100 806 998 762 997 717V600L900 400z" fill="url(#base)"/>
          <path d="M1027 653Q1080 715 1201 715C1340 712 1470 620 1470 535V515Q1470 498 1464 482L1425 347Q1410 235 1332 188H1000z" fill="url(#mid)"/>
          <path d="M1180 664C1310 650 1426 530 1426 385Q1424 260 1332 188H1100z" fill="url(#mid)"/>
          <path d="M1180 664C1310 650 1426 530 1426 385Q1424 260 1332 188H1100z" fill="url(#topr)"/>
          <path d="M1320 188Q1363 270 1363 355C1363 460 1310 550 1262 598L1150 450 1150 188z" fill="url(#outer)"/>
          <path d="M1027 653Q1080 715 1150 711L1139 673z" fill="#8e9299"/>
          <path d="M950 188C900 235 868 305 868 384C868 544 979 674 1115 674C1221 674 1308 564 1308 430C1308 350 1260 240 1176 188z" fill="url(#ring)"/>
          <path d="M966 188C935 240 922 300 922 355C922 450 965 530 1021 594C1060 625 1110 641 1156 641C1210 640 1240 620 1258 600C1285 570 1306 500 1306 430C1306 350 1260 240 1176 188z" fill="url(#band)"/>
          <path d="M1136 188C1040 240 971 340 971 441C971 510 990 555 1021 594C1060 625 1110 641 1156 641C1210 640 1240 620 1258 600C1285 570 1306 500 1306 430C1306 350 1260 240 1176 188z" fill="url(#deep)"/>
          <path d="M1001 564C1006 500 1090 430 1176 402Q1240 384 1301 390C1316 480 1290 560 1258 600Q1236 616 1213 625L1115 638Q1060 624 1019 592z" fill="url(#inner)"/>
          <path d="M1115 638Q1160 627 1213 625Q1170 645 1115 638z" fill="#9c9e9c"/>
          <path d="M1117 639 1089 671M1139 673 1150 711V800" fill="none" class="seam"/>
          <path d="M950 188C900 235 868 305 868 384C868 544 979 674 1115 674C1221 674 1308 564 1308 430C1308 350 1260 240 1176 188" class="rim dark"/>
          <path d="M950 188C900 235 868 305 868 384C868 544 979 674 1115 674C1221 674 1308 564 1308 430C1308 350 1260 240 1176 188" class="rim"/>
        </g>
        <g fill="none">
          <path d="M848 596v-38" stroke="#1512d2" stroke-width="4"/><path d="m848 543 5 20h-10z" fill="#1512d2"/>
          <path d="m850 597 10-10" stroke="#0b8a14" stroke-width="4"/><path d="m869 580-4 12-8-8z" fill="#0b8a14"/>
          <path d="m852 600 35 4" stroke="#e2180c" stroke-width="3"/><path d="m901 606-18 3 1-9z" fill="#e2180c"/>
          <circle cx="848" cy="599" r="6" fill="#fff200" stroke="#b8a800"/>
        </g>
        <text x="842" y="538" fill="#3b2fc4" class="axis">Z</text>
        <text x="866" y="581" fill="#2eb34a" class="axis">Y</text>
        <text x="907" y="613" fill="#e2382c" class="axis">X</text>
        <path d="m834 597 16 16-7 1 3 8-4 2-4-9-4 4z" fill="#f2f5f8" stroke="#666"/>
        <path d="M851 621h6v6h-6z" fill="#f3d9a0" stroke="#b87a1c" stroke-width="1.500"/>
        <g opacity=".95">
          <path d="m1802 245 24-13 54 4-16 18z" fill="#7f7f7f"/><path d="m1802 245 62 9-2 60-58-9z" fill="#858585"/><path d="m1864 254 16-18-2 57-16 21z" fill="#6f6f6f"/>
          <path d="M1843 269v-28" stroke="#6f6aa8" stroke-width="3"/><path d="m1846 269 24 2" stroke="#a86a6a" stroke-width="2"/><path d="m1846 267 5-5" stroke="#5f9a66" stroke-width="2"/><circle cx="1843" cy="269" r="2.500" fill="#f4ee6a"/>
        </g>
        <text x="1809" y="282" transform="rotate(6 1809 282)" fill="#474747" class="face">FRONT</text>
      </svg>
      <div class="tree">
        <div class="grip"></div>
        <ul>
          <li class="root"><span class="node"><svg width="16" height="16"><use href="#asm"/></svg>Elbow.asm</span></li>
          <li><button class="exp" aria-label="Expand Coordinate Systems">+</button><label><input type="checkbox" checked><span class="node"><svg width="20" height="18"><use href="#csys"/></svg>Coordinate Systems</span></label></li>
          <li><button class="exp" aria-label="Expand Reference Planes">+</button><label class="off"><input type="checkbox"><span class="node"><svg width="20" height="14"><use href="#planes"/></svg>Reference Planes</span></label></li>
          <li><button class="exp" aria-label="Expand Assembly Copy">+</button><span class="node copy"><svg width="20" height="18"><use href="#asmCopy"/></svg>Assembly Copy_1</span></li>
        </ul>
      </div>
      <div class="prompt"><i></i><p>No top level part selected.</p></div>
    </main>
  </div>

  <footer class="status">
    <p class="msg">Select components to edit or click the Insert Component command, Create Part In-Place command, Parts Library tab or drag components from W</p>
    <p class="count">0 items are selected</p>
    <div class="find"><input type="text" value="Command Finder" aria-label="Command Finder"></div>
    <div class="tools">
      <button aria-label="Go"><svg class="i18"><use href="#redo"/></svg></button>
      <button aria-label="Zoom area"><svg class="i20"><use href="#zoomArea"/></svg></button>
      <button aria-label="Zoom"><svg class="i20"><use href="#zoomI"/></svg></button>
      <button aria-label="Fit"><svg class="i20"><use href="#fit"/></svg></button>
      <button aria-label="Pan"><svg class="i20"><use href="#pan"/></svg></button>
      <button aria-label="Rotate"><svg class="i20"><use href="#rotate"/></svg></button>
      <button aria-label="Previous view"><svg class="i20"><use href="#prev"/></svg></button>
      <button aria-label="View styles"><svg class="i20"><use href="#stack"/></svg></button>
      <button aria-label="View orientation"><svg class="i20"><use href="#cubes"/></svg></button>
      <button aria-label="Zoom out"><svg class="i20" viewBox="0 0 20 20"><circle cx="10" cy="10" r="8.500" fill="#eef3fb" stroke="#6a7890" stroke-width="1.500"/><path d="M6 10h8" stroke="#3a4458" stroke-width="2"/></svg></button>
      <input class="zoom" type="range" aria-label="Zoom level" value="48">
      <button aria-label="Zoom in"><svg class="i20" viewBox="0 0 20 20"><circle cx="10" cy="10" r="8.500" fill="#eef3fb" stroke="#6a7890" stroke-width="1.500"/><path d="M6 10h8M10 6v8" stroke="#3a4458" stroke-width="2"/></svg></button>
      <button class="end" aria-label="Record"><svg class="i20"><use href="#rec"/></svg></button>
      <button class="end" aria-label="Upload"><svg class="i20"><use href="#up"/></svg></button>
    </div>
  </footer>
</div>
</body>
</html>
```

FILE: styles.css
```css
* { box-sizing: border-box; }
html, body { margin: 0; }
body {
  background: #000;
  padding: 20px 0 11px;
  min-height: 100vh;
  display: flex;
  flex-direction: column;
  font: 13px/16px "Open Sans", "Noto Sans", sans-serif;
  color: #50525a;
}
button, input, select { font: inherit; color: inherit; }
button { background: none; border: 0; padding: 0; margin: 0; }
h1, h2, p, ul { margin: 0; padding: 0; font-weight: 400; font-size: 13px; }
ul { list-style: none; }
.sprite { position: absolute; }
svg { display: block; }
.i12 { width: 12px; height: 12px; }
.i18 { width: 18px; height: 18px; }
.i20 { width: 20px; height: 20px; }
.i24 { width: 24px; height: 24px; }
.caret {
  display: inline-block;
  border: 3px solid transparent;
  border-top: 4px solid #777982;
  border-bottom: 0;
  vertical-align: 2px;
}
.caret.light { border-top-color: #ccd6e6; }

.app {
  flex: 1;
  display: flex;
  flex-direction: column;
  position: relative;
  background: #d0d0dc;
}

/* title bar */
.titlebar {
  height: 26px;
  display: grid;
  grid-template-columns: 1fr auto 1fr;
  align-items: start;
  border-bottom: 1px solid #6d86a8;
  background:
    radial-gradient(ellipse 36px 20px at 227px 20px, #b59fac, transparent),
    radial-gradient(ellipse 60px 26px at 130px 22px, #7fa6c8aa, transparent),
    radial-gradient(ellipse 150px 30px at 960px 14px, #9fbcd8cc, transparent),
    radial-gradient(ellipse 26px 26px at 1180px 14px, #c8dfec, transparent),
    radial-gradient(ellipse 26px 22px at 1122px 18px, #b0d0ec, transparent),
    radial-gradient(ellipse 26px 26px at 1232px 20px, #b6d2ec, transparent),
    radial-gradient(ellipse 28px 20px at 1320px 22px, #b9d4f6, transparent),
    radial-gradient(ellipse 30px 20px at 1415px 22px, #c4ddfe, transparent),
    radial-gradient(ellipse 30px 20px at 1508px 22px, #c6e0ff, transparent),
    linear-gradient(90deg, #5b7092, #2d568f 12%, #1f5296 30%, #2a5f9f 50%, #1f4f8c 75%, #234a80 90%, #5f6f86);
}
.left { display: flex; align-items: flex-start; }
.right { display: flex; justify-content: flex-end; }
.quick {
  display: flex;
  align-items: center;
  gap: 6px;
  height: 24px;
  margin-left: 50px;
  padding: 0 14px 4px 9px;
  border-radius: 0 0 14px 0;
  background: #a8b8cc66;
}
.qsep { width: 2px; height: 18px; background: #e3e8f0; }
.caret.custom { margin: 9px 0 0 10px; }
.titlebar h1 {
  font-size: 14px;
  line-height: 28px;
  color: #101418;
  text-shadow: 0 0 6px #cfe0f4;
  white-space: nowrap;
}
.winbtns {
  display: flex;
  height: 21px;
  margin-right: 2px;
  border: 1px solid #aab4c2;
  border-top: 0;
  border-radius: 0 0 5px 5px;
  overflow: hidden;
}
.winbtns button {
  width: 34px;
  display: grid;
  place-items: center;
  border-right: 1px solid #aab4c2;
  background: linear-gradient(#93a0b4, #5c6b82 50%, #43536c 50%, #6d7f96);
}
.winbtns .close { width: 54px; border-right: 0; background: linear-gradient(#d88c7c, #c2523c 50%, #a92c18 50%, #d3583a); }
.winbtns svg { width: 16px; height: 14px; }
.orb { position: absolute; left: 2px; top: 5px; z-index: 2; }
.orb svg { width: 44px; height: 44px; }

/* tabs */
.tabs {
  display: flex;
  gap: 8px;
  height: 30px;
  padding: 3px 2px 0 75px;
  background: #d0d0dc;
}
.tabs > button { padding: 0 14px; color: #5b5d66; border-radius: 4px 4px 0 0; }
.tabs > .active { background: linear-gradient(#fff, #eef0f6); }
.doc { margin-left: auto; display: flex; gap: 8px; align-items: center; padding-bottom: 6px; }
.doc button:nth-child(-n+3) { margin-right: 2px; }

/* ribbon */
.ribbon {
  display: flex;
  gap: 4px;
  padding: 3px 3px 2px;
  height: 109px;
  background: linear-gradient(#f8f8fd, #ececf4 18px, #dcdde6 20px, #fbfbff 98px, #f4f4fc);
}
.group {
  flex: none;
  display: flex;
  flex-direction: column;
  border: 1px solid #b4b5be;
  border-bottom-color: #8f9199;
  border-radius: 4px;
  background: linear-gradient(#f4f4fa, #ececf3 16px, #dadbe4 18px, #f6f7fc 80px);
  overflow: hidden;
}
.group h2 {
  margin-top: auto;
  height: 20px;
  line-height: 20px;
  text-align: center;
  background: linear-gradient(#dcdde5, #bfc0c9);
  color: #62646c;
}
.body { display: flex; height: 82px; padding: 1px 3px 0; }
.g-clip { width: 100px; }
.g-select { width: 127px; }
.g-sketch { width: 137px; }
.g-asm { width: 414px; }
.g-mod { width: 240px; }
.g-mot { width: 70px; }
.g-face { width: 90px; }
.g-pat { width: 62px; }
.g-conf { width: 193px; }
.g-ori { width: 190px; }
.g-style { width: 50px; }
.g-win { width: 84px; }
.big {
  flex: none;
  display: flex;
  flex-direction: column;
  align-items: center;
  height: 80px;
  text-align: center;
  white-space: nowrap;
}
.ic { width: 38px; height: 38px; margin: 4px 0; flex: none; }
.w50 { width: 50px; }
.w52 { width: 52px; }
.w60 { width: 60px; }
.w78 { width: 78px; }
.w86 { width: 86px; }
.hot {
  border-radius: 3px;
  background: linear-gradient(#d99a5c, #fbb874 8px, #fda74c 36px, #fd9a2e 38px, #fdc668 60px, #fff0a0);
  box-shadow: inset 0 0 0 1px #b98f5a;
}
.split { background: linear-gradient(#d99a5c, #fbb874 8px, #fda74c 24px, #fd9a2e 44px, #d88a34 45px, #fdcf78 47px, #fff0a0); }
.split .caret { margin-top: 5px; }
.small {
  display: grid;
  grid-template-rows: repeat(3, 27px);
  grid-auto-flow: column;
  grid-auto-columns: 26px;
}
.small button { display: grid; place-items: center; }
.body > .caret { align-self: flex-start; margin: 40px 4px 0; }
.body > .caret.low { margin-top: 66px; }
.sep { width: 1px; height: 74px; margin: 3px 4px 0; background: #9fa1aa; }
.g-mot .sep { margin: 3px 3px 0; }
.g-mot .body, .g-sketch .body { padding-left: 2px; }
.g-face .body, .g-pat .body { padding-left: 4px; }
.body.col { flex-direction: column; gap: 10px; padding: 11px 5px 0 3px; }
.combo, .strip { display: flex; height: 26px; border: 1px solid #b9bac4; background: #f1f1f6; }
.combo { width: 181px; align-items: center; }
.combo select { appearance: none; flex: 1; border: 0; background: transparent; height: 24px; }
.combo .caret { margin-right: 5px; border-top-color: #b5b6bf; }
.combo button { border-left: 1px solid #b9bac4; width: 26px; height: 24px; display: grid; place-items: center; }
.strip button { flex: 1; display: grid; place-items: center; border-right: 1px solid #dcdde5; }
.strip button:last-child { border-right: 0; }
.stylebtn { display: flex; flex-direction: column; align-items: center; height: 100px; padding-top: 5px; }
.frame {
  width: 38px;
  height: 38px;
  margin-bottom: 5px;
  padding-top: 5px;
  display: flex;
  justify-content: center;
  border: 1px solid #b4b5be;
  border-radius: 4px;
  background: linear-gradient(#f8f8fc 27px, #d2d3dc 28px);
}
.stylebtn .caret { margin-top: 6px; }

/* work area */
.work { flex: 1; display: flex; border-top: 5px solid #c6c6ce; min-height: 600px; }
.side {
  flex: none;
  width: 32px;
  display: flex;
  flex-direction: column;
  align-items: flex-start;
  gap: 15px;
  padding-top: 8px;
  border-right: 2px solid #7d7e88;
  background: linear-gradient(90deg, #55565c, #d0d0dc 4px);
}
.side > button { height: 24px; margin-left: 1px; }
.side > .lib {
  width: 25px;
  height: 195px;
  padding-top: 5px;
  margin: 0 0 -6px;
  border-radius: 0 3px 3px 0;
  background: linear-gradient(90deg, #8f9098, #f4f4fd 4px);
  display: flex;
  flex-direction: column;
  align-items: center;
  gap: 5px;
}
.lib span { writing-mode: vertical-rl; white-space: nowrap; }
.side > .yt { width: 24px; font: 700 9px/12px "Liberation Sans", sans-serif; color: #333; background: #f4f4f4; }
.yt span, .yt b { display: block; }
.yt b { background: #cc3430; color: #fff; }
.view {
  flex: 1;
  position: relative;
  overflow: hidden;
  background: linear-gradient(#424242, #505050 11%, #686868 23%, #868686 37%, #9d9d9d 51%, #bababa 66%, #cfcfcf 75%, #dedede 85%, #f0f0f0 91%, #fefdfd 96%, #fff);
}
.scene { position: absolute; inset: 0; width: 100%; height: 100%; }
.edge path { stroke: #4e5358; vector-effect: non-scaling-stroke; }
.edge .seam { stroke-width: 2px; }
.edge .rim { fill: none; stroke: #d4dadd; stroke-width: 1px; }
.edge .rim.dark { stroke: #4e5257; stroke-width: 3px; }
.axis { font: 17px "Liberation Sans", sans-serif; }
.face { font: 15px "Liberation Sans", sans-serif; }
.tree { position: relative; width: 338px; padding: 1px; color: #26272b; }
.grip {
  height: 11px;
  border-radius: 2px;
  background:
    repeating-linear-gradient(110deg, #66686e 0 2px, transparent 2px 5px) center / 48px 4px no-repeat,
    linear-gradient(#dadadf, #a9aab0);
}
.tree ul { display: flex; flex-direction: column; gap: 2px; padding: 3px 0 0 4px; }
.tree li { display: flex; align-items: center; height: 18px; padding-left: 8px; }
.tree .root { padding-left: 0; }
.node {
  display: flex;
  align-items: center;
  gap: 3px;
  height: 18px;
  padding: 0 4px 0 1px;
  border-radius: 2px;
  background: linear-gradient(#fff, #d6d6da);
}
.root .node { gap: 5px; padding-left: 3px; }
.exp {
  width: 11px;
  height: 11px;
  font: 700 12px/10px "Liberation Sans", sans-serif;
  background: #eceef2;
  color: #111;
}
.tree label { display: flex; align-items: center; gap: 4px; margin-left: 7px; }
.tree .off { color: #85868c; }
.tree input {
  appearance: none;
  width: 15px;
  height: 14px;
  margin: 0;
  background: #f3f7fb;
  border: 1px solid #b4b8be;
  display: grid;
  place-items: center;
}
.tree input:checked::after {
  content: "";
  width: 9px;
  height: 5px;
  border: solid #16324f;
  border-width: 0 0 3px 3px;
  transform: translateY(-1px) rotate(-45deg);
}
.node.copy { margin-left: 3px; }
.prompt { position: absolute; left: 4px; bottom: 171px; color: #16171a; }
.prompt i { display: block; width: 25px; height: 5px; background: #f5b263; margin-bottom: 3px; }
.prompt p { padding: 0 4px 0 19px; height: 14px; line-height: 14px; background: #fff; }

/* status bar */
.status {
  flex: none;
  display: grid;
  grid-template-columns: minmax(0, 1fr) 322px 200px 480px;
  height: 26px;
  border-top: 2px solid #a9aabb;
  border-bottom: 1px solid #77787f;
  background: linear-gradient(#f0f0fd, #d6d6e4 9px, #c4c4cf 14px, #cbcbd6);
  line-height: 25px;
  white-space: nowrap;
  color: #3c3d44;
}
.msg { overflow: hidden; border-right: 1px solid #6f7078; }
.count { text-align: center; border-right: 1px solid #9a9ba5; }
.find { padding-left: 28px; }
.find input { display: block; width: 100%; height: 23px; border: 0; background: #fff; padding: 0 6px; color: #222; }
.tools { display: flex; align-items: center; gap: 7px; padding-left: 4px; overflow: hidden; background: linear-gradient(#e8eaf8, #cdd0e2 9px, #b2b4c2 14px, #bcbecb); }
.zoom { appearance: none; flex: 1; min-width: 0; margin: 0 -7px; height: 20px; background: linear-gradient(transparent 8px, #f4f4fa 8px 10px, #8a8c9a 10px 11px, transparent 11px); }
.zoom::-webkit-slider-thumb {
  appearance: none;
  width: 11px;
  height: 16px;
  background: #dfe3ef;
  border: 2px solid #6a7890;
  border-radius: 1px 1px 6px 6px;
}
.tools .end { border-left: 1px solid #8e909c; padding-left: 2px; height: 23px; display: flex; align-items: center; }
```
